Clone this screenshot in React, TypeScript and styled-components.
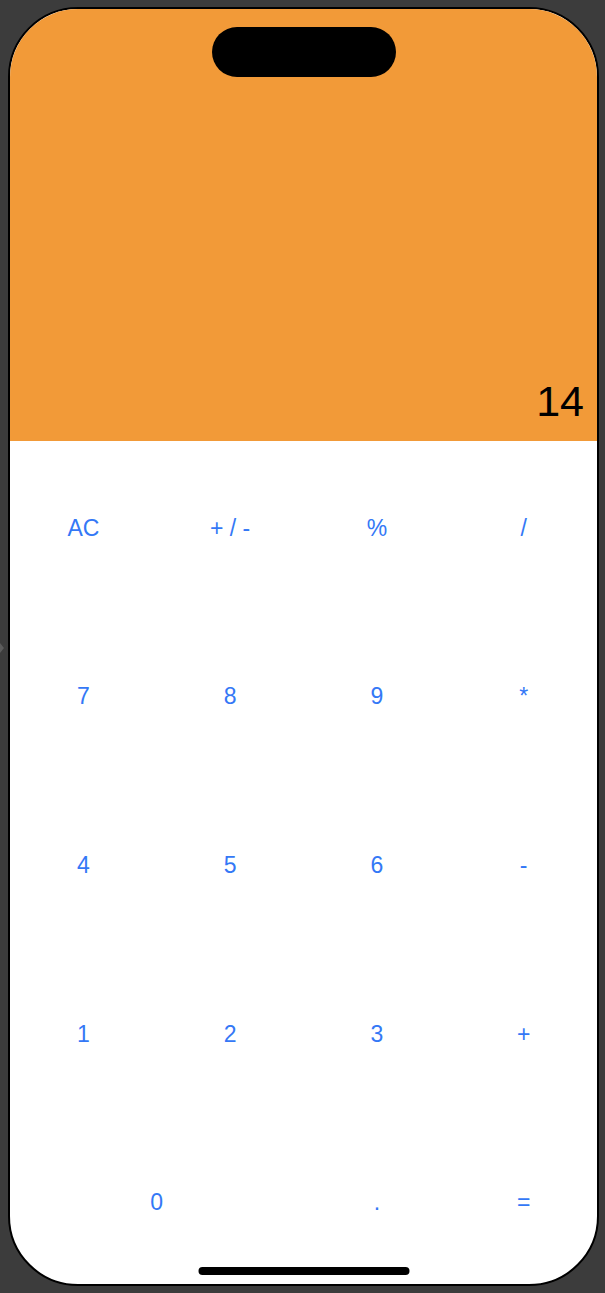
import React from 'react';
import styled, { createGlobalStyle } from 'styled-components';

const GlobalStyle = createGlobalStyle`
  html, body {
    margin: 0;
    padding: 0;
    background: #3c3c3c;
  }
  body {
    font-family: "Liberation Sans", Arial, sans-serif;
  }
`;

const Canvas = styled.div`
  position: relative;
  width: 605px;
  height: 1293px;
  box-sizing: border-box;
  padding: 7px 6px 7px 8px;
  background: #3c3c3c;
`;

const SideArrow = styled.div`
  position: absolute;
  left: 0;
  top: 643px;
  width: 0;
  height: 0;
  border-top: 5px solid transparent;
  border-bottom: 5px solid transparent;
  border-left: 4px solid #5c5c5c;
`;

const Device = styled.div`
  position: relative;
  width: 591px;
  height: 1279px;
  box-sizing: border-box;
  border: 2px solid #000;
  border-radius: 70px;
  overflow: hidden;
  display: flex;
  flex-direction: column;
  background: #fff;
`;

const Display = styled.div`
  height: 432px;
  flex-shrink: 0;
  background: #f29a38;
  display: flex;
  flex-direction: column;
  justify-content: space-between;
  align-items: center;
  padding: 18px 13px 18px 0;
  box-sizing: border-box;
`;

const Island = styled.div`
  width: 184px;
  height: 50px;
  border-radius: 25px;
  background: #000;
  margin-left: 13px;
`;

const Readout = styled.div`
  align-self: flex-end;
  font-size: 43px;
  line-height: 1;
  color: #000;
`;

const Keypad = styled.div`
  flex: 1;
  display: grid;
  grid-template-columns: repeat(4, 1fr);
  grid-template-rows: repeat(5, 1fr);
`;

const Key = styled.button<{ $span?: number }>`
  grid-column: span ${({ $span }) => $span ?? 1};
  border: none;
  background: transparent;
  color: #3478f6;
  font-family: "Liberation Sans", Arial, sans-serif;
  font-size: 23px;
  display: flex;
  align-items: center;
  justify-content: center;
  padding: 6px 0 0;
  cursor: pointer;
`;

const HomeIndicator = styled.div`
  position: absolute;
  left: 50%;
  bottom: 9px;
  transform: translateX(-50%);
  width: 211px;
  height: 8px;
  border-radius: 4px;
  background: #000;
`;

const keys: { label: string; span?: number }[] = [
  { label: 'AC' }, { label: '+ / -' }, { label: '%' }, { label: '/' },
  { label: '7' }, { label: '8' }, { label: '9' }, { label: '*' },
  { label: '4' }, { label: '5' }, { label: '6' }, { label: '-' },
  { label: '1' }, { label: '2' }, { label: '3' }, { label: '+' },
  { label: '0', span: 2 }, { label: '.' }, { label: '=' },
];

export default function App() {
  return (
    <>
      <GlobalStyle />
      <Canvas>
        <SideArrow />
        <Device>
          <Display>
            <Island />
            <Readout>14</Readout>
          </Display>
          <Keypad>
            {keys.map((k) => (
              <Key key={k.label} $span={k.span}>{k.label}</Key>
            ))}
          </Keypad>
          <HomeIndicator />
        </Device>
      </Canvas>
    </>
  );
}
